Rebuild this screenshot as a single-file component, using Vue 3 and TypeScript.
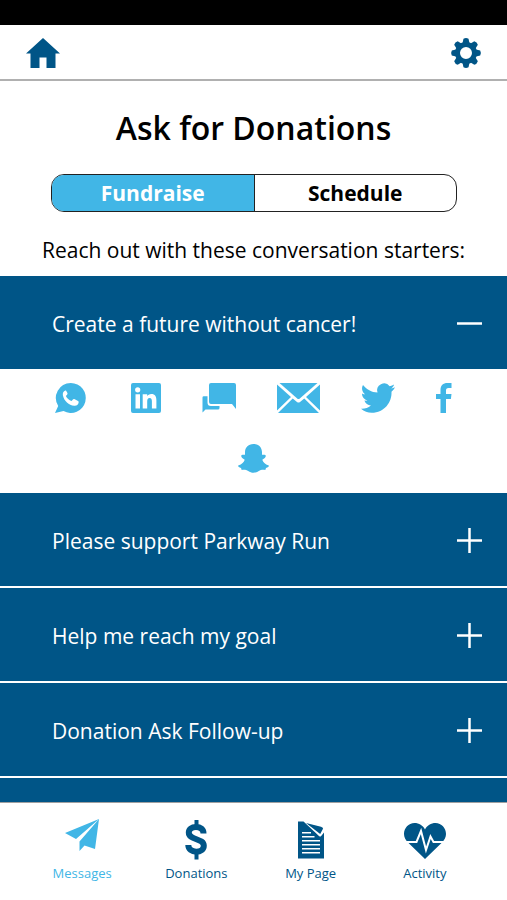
<script setup lang="ts">
import { ref } from 'vue'

interface Starter {
  id: number
  title: string
}

interface Shape {
  d: string
  line?: number
  color?: string
}

interface Icon {
  name: string
  width: number
  height: number
  shapes: Shape[]
}

const tabs = ['Fundraise', 'Schedule']
const activeTab = ref('Fundraise')
const openStarter = ref<number | null>(1)
const activeNav = ref('Messages')

const starters: Starter[] = [
  { id: 1, title: 'Create a future without cancer!' },
  { id: 2, title: 'Please support Parkway Run' },
  { id: 3, title: 'Help me reach my goal' },
  { id: 4, title: 'Donation Ask Follow-up' },
]

const channels: Icon[] = [
  {
    name: 'WhatsApp',
    width: 35,
    height: 30,
    shapes: [
      {
        d: 'M15.800 0a15 15 0 1 1-7.300 28.100L0 30l3.200-7A15 15 0 0 1 15.800 0ZM10.300 7.500C8.500 8.200 7.400 10 7.900 12.400c1.300 5.600 5.900 9.700 11.300 10.300 2.500.3 4.400-1.200 4.500-3.600 0-.6-.2-.9-.7-1.200l-3.700-1.800c-.6-.3-1-.1-1.400.4l-1.300 1.600c-2.600-1-4.600-2.900-5.700-5.200l1.300-1.500c.4-.4.400-.8.200-1.300l-1.300-2.400c-.2-.3-.5-.4-.8-.2Z',
      },
    ],
  },
  {
    name: 'LinkedIn',
    width: 30,
    height: 30,
    shapes: [
      {
        d: 'M2 0h26a2 2 0 0 1 2 2v26a2 2 0 0 1-2 2H2a2 2 0 0 1-2-2V2a2 2 0 0 1 2-2ZM4.500 11.300V25.500H9V11.300ZM6.700 4.200a2.600 2.600 0 1 0 0 5.200 2.600 2.600 0 0 0 0-5.200ZM11.700 11.300V25.500h4.500v-7c0-2 .6-3.500 2.400-3.500s2.300 1.500 2.300 3.500v7h4.500v-8c0-4-1.200-6.500-5.100-6.500-2 0-3.400 1-4.100 2.200v-1.900Z',
      },
    ],
  },
  {
    name: 'Text message',
    width: 34,
    height: 30,
    shapes: [
      { d: 'M9 0h23a2 2 0 0 1 2 2v24l-4-5H9a2 2 0 0 1-2-2V2a2 2 0 0 1 2-2Z' },
      { d: 'M5.500 13.200H1.800Q.5 13.200.5 14.500V29.500l3-3H16Q17.500 26.500 17.500 25V23H9Q5.500 23 5.500 19.500Z' },
    ],
  },
  {
    name: 'Email',
    width: 43,
    height: 30,
    shapes: [
      { d: 'M2.500 0h38L22.800 15.500q-1.300 1-2.600 0Z' },
      { d: 'M0 1.500 14 14 0 27.500ZM43 1.500 29 14 43 27.500Z' },
      { d: 'M15.700 15.500 20 19q1.500 1 3 0l4.300-3.500L42 30H1Z' },
    ],
  },
  {
    name: 'Twitter',
    width: 34,
    height: 30,
    shapes: [
      {
        d: 'M34 4.300c-1.200.6-2.500.9-3.800 1.100C31.500 4.500 32.600 3.100 33.100 1.500c-1.300.8-2.800 1.300-4.400 1.700A7 7 0 0 0 16.500 9.600C10.500 9.300 5.500 6.500 2 2c-1.900 3.200-.8 7.200 2.200 9.300-1.200 0-2.200-.4-3.200-.9 0 3.400 2.300 6.300 5.600 7-1.100.3-2.100.3-3.200.1.900 2.800 3.500 4.800 6.500 4.900A14 14 0 0 1 0 25.700c3.100 2.800 6.800 4.100 10.700 4.100 12.800 0 20.300-10.600 19.800-21 1.400-1.200 2.700-2.800 3.500-4.500Z',
      },
    ],
  },
  {
    name: 'Facebook',
    width: 16,
    height: 30,
    shapes: [
      { d: 'M4.500 30V16H0v-5h4.500V7C4.500 2.400 7 0 11.500 0H15.500v5h-3c-1.900 0-2.500.9-2.500 2.700V11h5.500l-.6 5H10v14Z' },
    ],
  },
  {
    name: 'Snapchat',
    width: 31,
    height: 29,
    shapes: [
      {
        d: 'M15.500 0C10 0 7 3.800 7 8.300v2.500c-1-.2-2.300-.3-3.300.2-.9.900-.4 2.200.5 2.900l2.500 1.800C6 18 4 20.200.2 21.400c-.4 1.100.7 2 2.800 2.500l.7 2c2.400-.4 4.700-.2 6.500 1 1.800 1.200 3.300 1.800 5.300 1.800s3.500-.6 5.300-1.800c1.800-1.200 4.100-1.400 6.500-1l.7-2c2.100-.5 3.200-1.400 2.800-2.500-3.800-1.200-5.800-3.400-6.500-5.700l2.500-1.800c.9-.7 1.400-2 .5-2.900-1-.5-2.300-.4-3.300-.2V8.300C24 3.800 21 0 15.500 0Z',
      },
    ],
  },
]

const navItems: Icon[] = [
  {
    name: 'Messages',
    width: 34,
    height: 40,
    shapes: [{ d: 'M34 0 0 14l11 6ZM34 0 14.500 22.500v9.500l5-5.500L30 30Z' }],
  },
  {
    name: 'Donations',
    width: 22,
    height: 40,
    shapes: [
      { d: 'M11.500 1v6M11.500 33v7.500', line: 4 },
      { d: 'M18.500 14.500C18.500 10.200 15.500 8 11 8S3.800 10.200 3.800 13.500c0 8 15 5.500 15 13.200 0 3.800-3.300 6-7.600 6S3.300 30.200 3.300 26', line: 6 },
    ],
  },
  {
    name: 'My Page',
    width: 28,
    height: 40,
    shapes: [
      {
        d: 'M1 2.500h5.500L22 17q1.300 1 2.200 0l2.800-3.500v26H1ZM5 13v1.500h9V13ZM5 17v1.500h12.500V17ZM5 21v1.500h18V21ZM5 25v1.500h18V25ZM5 29v1.500h18V29ZM5 33v1.500h18V33Z',
      },
      { d: 'M9 4 24 7.800q2.500.8 2 2L23.200 15Z' },
    ],
  },
  {
    name: 'Activity',
    width: 42,
    height: 40,
    shapes: [
      {
        d: 'M21 40 4 23.500C1.500 21 0 18.300 0 15 0 9 4.500 4 10.500 4 15 4 19 6.500 21 10.500 23 6.500 27 4 31.500 4 37.500 4 42 9 42 15c0 3.300-1.500 6-4 8.500Z',
      },
      { d: 'M1 23h11.500l4.500-11L22 31l4.500-13.500 3 5.500H41', line: 2, color: '#fff' },
    ],
  },
]

function toggle(id: number): void {
  openStarter.value = openStarter.value === id ? null : id
}
</script>

<template>
  <div class="app">
    <div class="status-bar"></div>
    <header class="top-bar">
      <a class="icon-link" href="#home" aria-label="Home">
        <svg width="34" height="30" viewBox="0 0 34 30" aria-hidden="true">
          <path d="M17 0 34 15.500h-4.500V30h-9V19.500h-7V30H4.500V15.500H0Z" />
        </svg>
      </a>
      <button class="icon-link" type="button" aria-label="Settings">
        <svg width="30" height="30" viewBox="0 0 30 30" aria-hidden="true">
          <circle cx="15" cy="15" r="8.500" fill="none" stroke="currentColor" stroke-width="5" />
          <path
            v-for="n in 8"
            :key="n"
            d="m11.500 5 1-4.200Q15-.6 17.500.8l1 4.200Z"
            :transform="`rotate(${n * 45} 15 15)`"
          />
        </svg>
      </button>
    </header>

    <main class="content">
      <h1 class="title">Ask for Donations</h1>
      <div class="tabs" role="tablist">
        <button
          v-for="tab in tabs"
          :key="tab"
          class="tab"
          :class="{ active: activeTab === tab }"
          type="button"
          role="tab"
          :aria-selected="activeTab === tab"
          @click="activeTab = tab"
        >
          {{ tab }}
        </button>
      </div>
      <p class="intro">Reach out with these conversation starters:</p>

      <section v-for="starter in starters" :key="starter.id" class="starter">
        <button
          class="starter-head"
          type="button"
          :aria-expanded="openStarter === starter.id"
          @click="toggle(starter.id)"
        >
          <span>{{ starter.title }}</span>
          <svg width="25" height="25" viewBox="0 0 25 25" aria-hidden="true">
            <path
              :d="openStarter === starter.id ? 'M0 12.500h25' : 'M0 12.500h25M12.500 0v25'"
              fill="none"
              stroke="currentColor"
              stroke-width="2.500"
            />
          </svg>
        </button>
        <div v-if="openStarter === starter.id" class="channels">
          <button
            v-for="channel in channels"
            :key="channel.name"
            class="channel"
            type="button"
            :aria-label="channel.name"
          >
            <svg
              :width="channel.width"
              :height="channel.height"
              :viewBox="`0 0 ${channel.width} ${channel.height}`"
              aria-hidden="true"
            >
              <path v-for="shape in channel.shapes" :key="shape.d" :d="shape.d" fill-rule="evenodd" />
            </svg>
          </button>
        </div>
      </section>
      <div class="starter-rest"></div>
    </main>

    <nav class="bottom-nav">
      <a
        v-for="item in navItems"
        :key="item.name"
        class="nav-item"
        :class="{ active: activeNav === item.name }"
        :href="`#${item.name.toLowerCase().replace(' ', '-')}`"
        @click="activeNav = item.name"
      >
        <svg :width="item.width" :height="item.height" :viewBox="`0 0 ${item.width} ${item.height}`" aria-hidden="true">
          <path
            v-for="shape in item.shapes"
            :key="shape.d"
            :d="shape.d"
            :fill="shape.line ? 'none' : 'currentColor'"
            :stroke="shape.line ? (shape.color ?? 'currentColor') : 'none'"
            :stroke-width="shape.line"
            fill-rule="evenodd"
          />
        </svg>
        <span>{{ item.name }}</span>
      </a>
    </nav>
  </div>
</template>

<style>
body {
  margin: 0;
  background: #fff;
}
</style>

<style scoped>
.app {
  display: flex;
  flex-direction: column;
  height: 100vh;
  background: #fff;
  color: #000;
  font-family: "Open Sans", "Noto Sans", sans-serif;
}

button {
  margin: 0;
  padding: 0;
  border: 0;
  background: none;
  color: inherit;
  font: inherit;
  cursor: pointer;
}

svg {
  display: block;
  overflow: visible;
  fill: currentColor;
}

.status-bar {
  flex: none;
  height: 25px;
  background: #000;
}

.top-bar {
  box-sizing: border-box;
  display: flex;
  flex: none;
  align-items: center;
  justify-content: space-between;
  height: 56px;
  padding: 2px 26px 0;
  border-bottom: 2px solid #b0b0b0;
}

.icon-link {
  color: #005587;
}

.content {
  display: flex;
  flex: 1;
  flex-direction: column;
  min-height: 0;
  overflow: hidden;
}

.title {
  margin: 25px 0 24px;
  font-size: 32px;
  font-weight: 600;
  line-height: 44px;
  text-align: center;
}

.tabs {
  display: flex;
  flex: none;
  height: 36px;
  margin: 0 50px 0 51px;
  overflow: hidden;
  border: 1px solid #222;
  border-radius: 13px;
}

.tab {
  flex: 1;
  font-size: 21px;
  font-weight: 700;
  line-height: 36px;
}

.tab + .tab {
  border-left: 1px solid #222;
}

.tab.active {
  background: #41b6e6;
  color: #fff;
}

.intro {
  margin: 23px 0 11px;
  font-size: 21px;
  line-height: 30px;
  text-align: center;
  white-space: nowrap;
}

.starter {
  flex: none;
}

.starter-head {
  display: flex;
  align-items: center;
  justify-content: space-between;
  width: 100%;
  height: 93px;
  padding: 2px 25px 0 52px;
  background: #005587;
  color: #fff;
  font-size: 21px;
  line-height: 30px;
  text-align: left;
}

.starter + .starter:not(:nth-of-type(2)),
.starter-rest {
  border-top: 2px solid #fff;
}

.starter-rest {
  flex: 1;
  background: #005587;
}

.channels {
  display: flex;
  flex-wrap: wrap;
  justify-content: center;
  gap: 31px 41px;
  padding: 14px 40px 20px;
  color: #41b6e6;
}

.bottom-nav {
  display: grid;
  flex: none;
  grid-template-columns: repeat(4, 1fr);
  height: 97px;
  padding: 0 25px;
  border-top: 1px solid #a0a0a0;
}

.nav-item {
  display: flex;
  flex-direction: column;
  align-items: center;
  padding-top: 16px;
  color: #005587;
  font-size: 13px;
  line-height: 18px;
  text-decoration: none;
}

.nav-item span {
  margin-top: 5px;
}

.nav-item.active {
  color: #41b6e6;
}
</style>
